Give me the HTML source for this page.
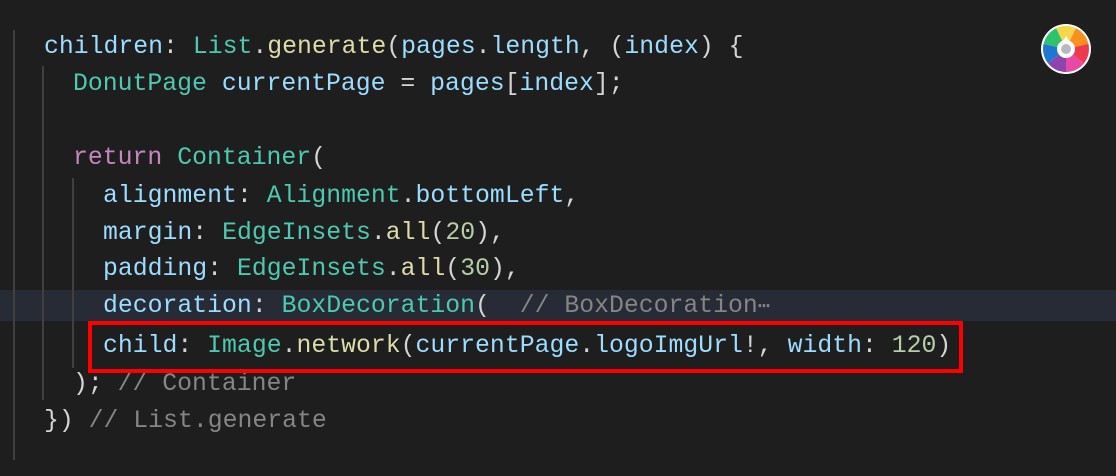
<!DOCTYPE html>
<html><head><meta charset="utf-8"><style>
html,body{margin:0;padding:0;background:#1e1e1e;width:1116px;height:476px;overflow:hidden}
.l{position:absolute;left:0;height:37px;line-height:37px;font-family:"Liberation Mono","DejaVu Sans Mono",monospace;font-size:24.8px;color:#d4d4d4;white-space:pre}
.v{color:#9cdcfe}.t{color:#4ec9b0}.f{color:#dcdcaa}.k{color:#c586c0}.n{color:#b5cea8}.c{color:#858585}
.g{position:absolute;width:2px;background:#404040}
</style></head><body>
<div style="position:absolute;left:0;top:290px;width:1116px;height:31px;background:#262b36"></div>
<div class="g" style="left:13px;top:30px;height:430px"></div>
<div class="g" style="left:42px;top:66px;height:334px"></div>
<div class="g" style="left:72px;top:178px;height:190px"></div>
<div class="l" style="top:29px;left:44px"><span class="v">children</span>: <span class="t">List</span>.<span class="f">generate</span>(<span class="v">pages</span>.<span class="v">length</span>, (<span class="v">index</span>) {</div>
<div class="l" style="top:66px;left:73px"><span class="t">DonutPage</span> <span class="v">currentPage</span> = <span class="v">pages</span>[<span class="v">index</span>];</div>
<div class="l" style="top:140px;left:73px"><span class="k">return</span> <span class="t">Container</span>(</div>
<div class="l" style="top:178px;left:103px"><span class="v">alignment</span>: <span class="t">Alignment</span>.<span class="v">bottomLeft</span>,</div>
<div class="l" style="top:215px;left:103px"><span class="v">margin</span>: <span class="t">EdgeInsets</span>.<span class="f">all</span>(<span class="n">20</span>),</div>
<div class="l" style="top:251px;left:103px"><span class="v">padding</span>: <span class="t">EdgeInsets</span>.<span class="f">all</span>(<span class="n">30</span>),</div>
<div class="l" style="top:288px;left:103px"><span class="v">decoration</span>: <span class="t">BoxDecoration</span>(  <span class="c">// BoxDecoration</span><span class="c" style="font-size:20px">⋯</span></div>
<div class="l" style="top:328px;left:103px"><span class="v">child</span>: <span class="t">Image</span>.<span class="f">network</span>(<span class="v">currentPage</span>.<span class="v">logoImgUrl</span>!, <span class="v">width</span>: <span class="n">120</span>)</div>
<div class="l" style="top:366px;left:73px">); <span class="c">// Container</span></div>
<div class="l" style="top:403px;left:44px">}) <span class="c">// List.generate</span></div>
<div style="position:absolute;left:88px;top:321px;width:867px;height:44px;border:4px solid #f00"></div>
<svg style="position:absolute;left:1040px;top:23px" width="52" height="52" viewBox="-26 -26 52 52">
<circle r="25" fill="#fff"/>
<g>
<path d="M0 0 L-9.8 -20.8 A23 23 0 0 1 9.8 -20.8Z" fill="#f7d64a"/>
<path d="M0 0 L9.8 -20.8 A23 23 0 0 1 22.4 -5.1Z" fill="#f7901e"/>
<path d="M0 0 L22.4 -5.1 A23 23 0 0 1 17.9 14.4Z" fill="#ee3a4f"/>
<path d="M0 0 L17.9 14.4 A23 23 0 0 1 0 23Z" fill="#e64aa5"/>
<path d="M0 0 L0 23 A23 23 0 0 1 -17.9 14.4Z" fill="#8e44ad"/>
<path d="M0 0 L-17.9 14.4 A23 23 0 0 1 -22.4 -5.1Z" fill="#1e78d2"/>
<path d="M0 0 L-22.4 -5.1 A23 23 0 0 1 -9.8 -20.8Z" fill="#2dc26b"/>
</g>
<circle r="9" fill="#fff"/><path d="M-4 -7 L0 -13 L4 -7Z" fill="#fff"/>
<circle r="5" fill="#b8b8c4"/>
</svg>
</body></html>
